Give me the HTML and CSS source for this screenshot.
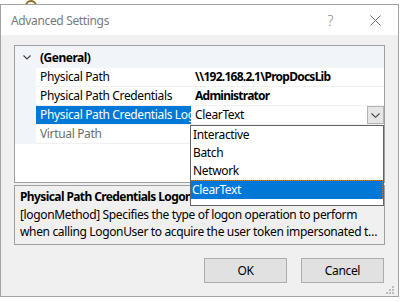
FILE: index.html
```html
<!DOCTYPE html>
<html>
<head>
<meta charset="utf-8">
<link rel="stylesheet" href="styles.css">
</head>
<body>
<svg class="bg-mark" width="14" height="6" viewBox="0 0 14 6"><path d="M2 7 A5 5 0 0 1 12 7" fill="none" stroke="#8f6c1e" stroke-width="2"/></svg>
<div class="window">
  <div class="titlebar">
    <span class="title">Advanced Settings</span>
    <span class="help">?</span>
    <svg class="close" width="11" height="11" viewBox="0 0 11 11"><path d="M0.5 0.5 L10.5 10.5 M10.5 0.5 L0.5 10.5" stroke="#6a6a6a" stroke-width="1" fill="none"/></svg>
  </div>
  <div class="content">
    <div class="propgrid">
      <div class="row cat">
        <div class="gutter"><svg width="8" height="5" viewBox="0 0 8 5"><path d="M0.5 0.5 L4 4 L7.5 0.5" fill="none" stroke="#444" stroke-width="1.2"/></svg></div>
        <div class="catlabel">(General)</div>
      </div>
      <div class="row">
        <div class="gutter"></div>
        <div class="label">Physical Path</div>
        <div class="value strong">\\192.168.2.1\PropDocsLib</div>
      </div>
      <div class="row">
        <div class="gutter"></div>
        <div class="label">Physical Path Credentials</div>
        <div class="value strong">Administrator</div>
      </div>
      <div class="row">
        <div class="gutter"></div>
        <div class="label selected">Physical Path Credentials Logon Type</div>
        <div class="value edit"><span class="edit-text">ClearText</span><span class="dd-btn"><svg width="9" height="5" viewBox="0 0 9 5"><path d="M0.5 0.5 L4.5 4.3 L8.5 0.5" fill="none" stroke="#444" stroke-width="1.1"/></svg></span></div>
      </div>
      <div class="row">
        <div class="gutter"></div>
        <div class="label dim">Virtual Path</div>
        <div class="value"></div>
      </div>
      <div class="listbox">
        <div class="item">Interactive</div>
        <div class="item">Batch</div>
        <div class="item">Network</div>
        <div class="item active">ClearText</div>
      </div>
    </div>
    <div class="desc">
      <div class="desc-title">Physical Path Credentials Logon Type</div>
      <div class="desc-line">[logonMethod] Specifies the type of logon operation to perform</div>
      <div class="desc-line">when calling LogonUser to acquire the user token impersonated to access the physical path for the virtual directory.</div>
    </div>
    <div class="buttons">
      <div class="btn">OK</div>
      <div class="btn">Cancel</div>
    </div>
  </div>
  <svg class="grip" width="9" height="9" viewBox="0 0 9 9">
    <rect x="6" y="0" width="2" height="2" fill="#bdbdbd"/>
    <rect x="3" y="3" width="2" height="2" fill="#bdbdbd"/>
    <rect x="6" y="3" width="2" height="2" fill="#bdbdbd"/>
    <rect x="0" y="6" width="2" height="2" fill="#bdbdbd"/>
    <rect x="3" y="6" width="2" height="2" fill="#bdbdbd"/>
    <rect x="6" y="6" width="2" height="2" fill="#bdbdbd"/>
  </svg>
</div>
</body>
</html>
```
FILE: styles.css
```css
* { box-sizing: border-box; }
html, body { margin: 0; padding: 0; background: #ffffff; }
body {
  width: 401px;
  height: 302px;
  overflow: hidden;
  position: relative;
  font-family: "Noto Sans", "Open Sans", sans-serif;
  font-size: 12px;
  letter-spacing: -0.35px;
  color: #000;
}
.bg-mark { position: absolute; left: 24px; top: -1px; }
.window {
  position: relative;
  margin-top: 4px;
  width: 399px;
  height: 293px;
  border: 1px solid #a3a3a3;
  background: #f0f0f0;
  display: flex;
  flex-direction: column;
}
.titlebar {
  height: 30px;
  background: #ffffff;
  display: flex;
  align-items: center;
  padding-left: 10px;
  flex: none;
}
.title { flex: 1; color: #7a7a7a; padding-top: 1px; }
.help { color: #8a8a8a; font-size: 14px; font-weight: 300; margin-right: 37px; padding-top: 1px; }
.close { margin-right: 17px; }
.content {
  flex: 1;
  padding: 10px 13px 0 13px;
  display: flex;
  flex-direction: column;
}
.propgrid {
  position: relative;
  height: 138px;
  border: 1px solid #a0a0a0;
  background: #ffffff;
  flex: none;
}
.row {
  display: grid;
  grid-template-columns: 21px 155px 1fr;
  height: 19px;
}
.row.cat {
  height: 22px;
  background: #f1f4f9;
  grid-template-columns: 21px 1fr;
  font-weight: 700;
  letter-spacing: -0.5px;
  align-items: center;
}
.gutter { background: #f1f4f9; display: flex; align-items: center; justify-content: center; padding-left: 3px; }
.cat .gutter { padding-top: 1px; }
.catlabel { padding-left: 4px; }
.label, .value {
  border-bottom: 1px solid #f0f0f0;
  line-height: 18px;
  white-space: nowrap;
  overflow: hidden;
  padding-left: 4px;
}
.label.selected { background: #0078d7; color: #ffffff; }
.label.dim { color: #6d6d6d; }
.value.strong { font-weight: 700; letter-spacing: -0.75px; }
.value.edit { display: flex; padding-right: 0; }
.edit-text { flex: 1; }
.dd-btn {
  width: 17px;
  height: 18px;
  background: #e5e5e5;
  border: 1px solid #b4b4b4;
  display: flex;
  align-items: center;
  justify-content: center;
}
.listbox {
  position: absolute;
  left: 175px;
  top: 79px;
  width: 194px;
  height: 81px;
  background: #ffffff;
  border: 1px solid #646464;
  z-index: 2;
}
.item { height: 18px; line-height: 18px; padding-left: 2px; }
.item.active {
  background: #0078d7;
  color: #ffffff;
  height: 19px;
  border-top: 1px dotted #c87a2a;
  border-right: 1px dotted #c87a2a;
  line-height: 17px;
  padding-left: 1px;
}
.desc {
  margin-top: 2px;
  height: 60px;
  border: 1px solid #a0a0a0;
  padding: 1px 0 0 5px;
  flex: none;
}
.desc-title { font-weight: 700; letter-spacing: -0.6px; height: 19px; line-height: 19px; white-space: nowrap; overflow: hidden; }
.desc-line { line-height: 17px; white-space: nowrap; overflow: hidden; text-overflow: ellipsis; padding-right: 6px; }
.buttons {
  margin-top: 13px;
  display: flex;
  justify-content: flex-end;
  gap: 14px;
  padding-right: 1px;
}
.btn {
  width: 83px;
  height: 25px;
  background: #e1e1e1;
  border: 1px solid #adadad;
  display: flex;
  align-items: center;
  justify-content: center;
}
.grip { position: absolute; right: 3px; bottom: 1px; }
```
